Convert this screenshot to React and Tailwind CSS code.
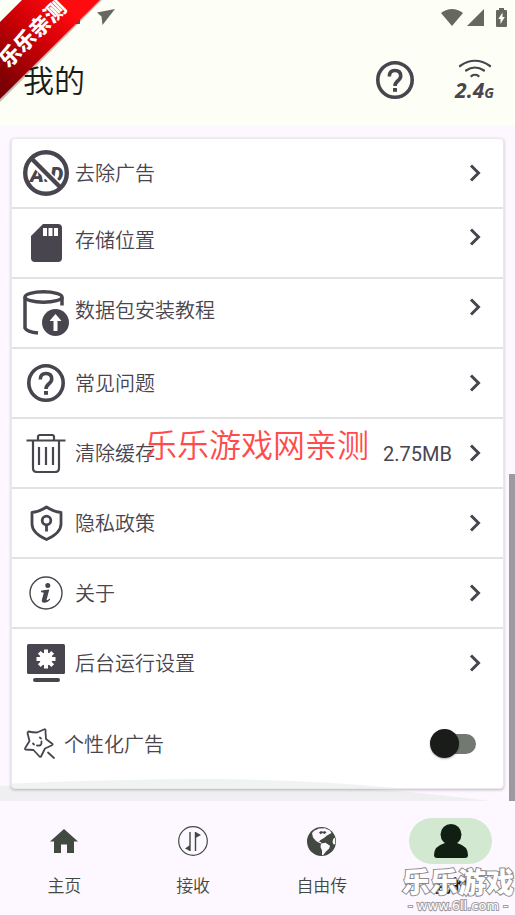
import React, { useState } from "react";

const MENU = [
  { id: "ads", label: "去除广告", Icon: NoAdsIcon },
  { id: "storage", label: "存储位置", Icon: SdCardIcon, raised: true },
  { id: "packages", label: "数据包安装教程", Icon: DatabaseIcon, raised: true },
  { id: "faq", label: "常见问题", Icon: HelpIcon },
  { id: "cache", label: "清除缓存", Icon: TrashIcon, value: "2.75MB" },
  { id: "privacy", label: "隐私政策", Icon: ShieldIcon },
  { id: "about", label: "关于", Icon: InfoIcon },
  { id: "background", label: "后台运行设置", Icon: MonitorIcon },
];

const TABS = [
  { id: "home", label: "主页", Icon: HomeIcon },
  { id: "receive", label: "接收", Icon: TransferIcon },
  { id: "free", label: "自由传", Icon: GlobeIcon },
  { id: "me", label: "我的", Icon: PersonIcon },
];

export default function App() {
  const [tab, setTab] = useState("me");

  return (
    <div className="relative flex min-h-screen flex-col overflow-hidden bg-[#fdf7ff] font-['Roboto','Noto_Sans_CJK_SC',sans-serif] text-[#49454f]">
      <Header />
      <main className="relative flex-1 px-[11px] py-3">
        <Settings />
        {/* Scroll thumb */}
        <div className="absolute right-0 bottom-0 h-[327px] w-[6px] bg-[#9e98a1]" />
      </main>
      <TabBar tab={tab} onChange={setTab} />
      <Ribbon />
    </div>
  );
}

function Header() {
  return (
    <header className="h-[126px] bg-[#fdfef5]">
      <StatusBar />
      <div className="flex h-[92px] items-center pr-5 pl-[23px]">
        <h1 className="flex-1 pt-1 text-[31px] font-[350] text-[#1a1c19]">我的</h1>
        <button type="button" aria-label="帮助" className="mr-10">
          <HelpIcon />
        </button>
        <button type="button" className="flex w-[41px] flex-col items-center pt-1">
          <svg width="34" height="19" viewBox="0 0 34 19" fill="none" stroke="#49454f" strokeLinecap="round" strokeWidth="2.2">
            <path d="M2 7Q17-3.500 32 7" />
            <path d="M8 11.500Q17 5.500 26 11.500" />
            <path d="M13.500 17Q17 14.500 20.500 17" />
          </svg>
          <span className="font-['Open_Sans'] text-[21px] leading-6 font-bold italic">
            2.4<span className="text-[14px]">G</span>
          </span>
        </button>
      </div>
    </header>
  );
}

function StatusBar() {
  return (
    <div className="flex h-[34px] items-center justify-between pr-2 pl-[75px] text-[#666860]">
      <svg width="40" height="18" viewBox="0 0 40 18" fill="currentColor">
        <path d="M0 11h5v5H0z" />
        <path d="M22 4.500L40 1 27.500 17 26.500 8.500z" />
      </svg>
      <div className="flex items-center">
        <svg width="22" height="17" viewBox="0 0 22 17" fill="currentColor" className="mr-1">
          <path d="M0 4Q11-4 22 4L11 17z" />
        </svg>
        <svg width="17" height="17" viewBox="0 0 17 17" fill="currentColor" className="mr-3">
          <path d="M17 0v17H0z" />
        </svg>
        <svg width="11" height="19" viewBox="0 0 11 19">
          <path fill="currentColor" d="M3 0h5v2h2q1 0 1 1v15q0 1-1 1H1q-1 0-1-1V3q0-1 1-1h2z" />
          <path fill="#fdfef5" d="M6.500 4.500v4.500h2.300L4.500 16v-5H2.300z" />
        </svg>
      </div>
    </div>
  );
}

function Settings() {
  const [personalized, setPersonalized] = useState(false);

  return (
    <div className="relative">
      {/* Pale hill behind the card */}
      <svg className="absolute -bottom-3 -left-[11px]" width="490" height="22" viewBox="0 0 490 22" fill="#efeef0">
        <path d="M0 7Q270-7 490 22H0z" />
      </svg>
      <section className="relative overflow-hidden rounded border border-[#ebe8ee] bg-white shadow-[0_1px_3px_rgba(0,0,0,0.25)]">
        <svg className="absolute bottom-0 left-0" width="400" height="9" viewBox="0 0 400 9" fill="#f0f4f1">
          <path d="M0 4.500Q110 0 200 0Q300 1 385 9H0z" />
        </svg>
        <ul>
          {MENU.map((item) => (
            <MenuRow key={item.id} item={item} />
          ))}
        </ul>
        <label className="relative flex h-[89px] cursor-pointer items-center pr-[27px] pl-3 text-[20px] font-[350]">
          <StarIcon />
          <span className="ml-2 flex-1 pt-0.5">个性化广告</span>
          <input
            type="checkbox"
            role="switch"
            checked={personalized}
            onChange={(e) => setPersonalized(e.target.checked)}
            className="relative h-[29px] w-[46px] appearance-none before:absolute before:top-[5px] before:right-0
                       before:h-5 before:w-10 before:rounded-full before:bg-[#717971] after:absolute after:top-0
                       after:left-0 after:size-[29px] after:rounded-full after:bg-[#1a1c19]
                       after:shadow-[0_1px_2px_rgba(0,0,0,0.3)] checked:after:left-[17px]"
          />
        </label>
      </section>
      <p className="pointer-events-none absolute top-[284px] left-[134px] text-[32px] leading-12 font-[350] text-[#ff4b4b]">
        乐乐游戏网亲测
      </p>
    </div>
  );
}

function MenuRow({ item }) {
  const { label, Icon, value, raised } = item;

  return (
    <li className="h-[70px] border-b-2 border-[#e2e1e3] last:border-transparent">
      <button type="button" className="flex h-full w-full items-center pr-[21px] pl-[11px] text-left">
        <span className="flex w-[46px] justify-center">
          <Icon />
        </span>
        <span className={`ml-[6px] flex-1 text-[20px] font-[350] ${raised ? "pb-1" : "pt-0.5"}`}>{label}</span>
        {value && <span className="mr-[17px] pt-0.5 text-[20px]">{value}</span>}
        <span className={raised ? "pb-3" : ""}>
          <svg width="13" height="18" viewBox="0 0 13 18" fill="none" stroke="currentColor" strokeWidth="3">
            <path d="M2 1.500L9.500 9 2 16.500" />
          </svg>
        </span>
      </button>
    </li>
  );
}

function TabBar({ tab, onChange }) {
  return (
    <nav className="relative grid h-[114px] grid-cols-4 bg-[#fdf7ff] pt-[17px] text-[#424940]">
      {TABS.map(({ id, label, Icon }) => {
        const active = id === tab;
        return (
          <button key={id} type="button" onClick={() => onChange(id)} className="flex flex-col items-center">
            <span
              className={`flex h-[46px] w-[83px] items-center justify-center rounded-full
                ${active ? "bg-[#d3e8d0] text-[#111f12]" : ""}`}
            >
              <Icon />
            </span>
            <span className={`mt-2 text-[17px] leading-7 ${active ? "font-bold text-[#1a1c19]" : "font-[350]"}`}>
              {label}
            </span>
          </button>
        );
      })}
      <Watermark />
    </nav>
  );
}

function Watermark() {
  return (
    <div className="pointer-events-none absolute right-px bottom-px flex flex-col items-center text-white [paint-order:stroke]">
      <span className="text-[28px] leading-7 font-black [-webkit-text-stroke:2px_#8b888e]">乐乐游戏</span>
      <span className="font-['DejaVu_Sans'] text-[13px] leading-4 [-webkit-text-stroke:2px_#a19ea4]">
        - www.6ll.com -
      </span>
    </div>
  );
}

function Ribbon() {
  return (
    <div className="pointer-events-none absolute top-0 left-0 size-[102px]">
      <svg className="absolute inset-0" width="102" height="102" viewBox="0 0 102 102">
        <defs>
          <linearGradient id="ribbon" x1="0" y1="1" x2="1" y2="0">
            <stop offset="0.1" stopColor="#7d0004" />
            <stop offset="0.5" stopColor="#cf0006" />
            <stop offset="0.8" stopColor="#ff0a0f" />
          </linearGradient>
        </defs>
        <path d="M24 0h78L0 102V24z" fill="#000" opacity="0.25" />
        <path d="M22 0h78L0 99V22z" fill="url(#ribbon)" />
      </svg>
      <span className="absolute top-[20px] -left-[9px] w-[84px] -rotate-45 text-center text-[21px] leading-7 font-black whitespace-nowrap text-white">
        乐乐亲测
      </span>
    </div>
  );
}

/* ---------- Menu icons ---------- */

function NoAdsIcon() {
  return (
    <svg width="46" height="46" viewBox="0 0 46 46">
      <text x="7" y="32" fontSize="21" fontWeight="900" fontStyle="italic" fontFamily="Roboto" fill="currentColor">
        A.D
      </text>
      <path d="M7 9l31 29" stroke="#fff" strokeWidth="8" />
      <circle cx="23" cy="23" r="20.800" fill="none" stroke="currentColor" strokeWidth="4.400" />
      <path d="M8 8l30 30" stroke="currentColor" strokeWidth="4.400" />
    </svg>
  );
}

function SdCardIcon() {
  return (
    <svg width="31" height="38" viewBox="0 0 31 38">
      <path fill="currentColor" d="M12 0h15q4 0 4 4v30q0 4-4 4H4q-4 0-4-4V12z" />
      <path fill="#fff" d="M12 4h4v8h-4zM17.500 4h4v8h-4zM23 4h4v8h-4z" />
    </svg>
  );
}

function DatabaseIcon() {
  return (
    <svg width="46" height="46" viewBox="0 0 46 46" fill="none" stroke="currentColor" strokeWidth="3.500">
      <ellipse cx="20.500" cy="7" rx="18.500" ry="5.200" />
      <path d="M2 7v31q2 4 13 5M39 7v8.500" />
      <circle cx="32.500" cy="32.500" r="13.500" fill="currentColor" stroke="none" />
      <path fill="#fff" stroke="none" d="M32.500 24l6 7H34.500v10h-4V31h-4z" />
    </svg>
  );
}

function HelpIcon() {
  return (
    <svg width="38" height="38" viewBox="0 0 38 38" fill="none" stroke="currentColor" strokeWidth="3.600">
      <circle cx="19" cy="19" r="17.200" />
      <path d="M13.300 15.500q0-6 5.700-6t5.700 5.500q0 2.500-3 5-2.700 2.200-2.700 5" />
      <path d="M19 27v3.800" strokeWidth="4" />
    </svg>
  );
}

function TrashIcon() {
  return (
    <svg width="40" height="40" viewBox="0 0 40 40" fill="none" stroke="currentColor" strokeWidth="2.200">
      <path d="M.500 7.500h39M12 7V4q0-2 2-2h12q2 0 2 2v3M7 8v27q0 4 4 4h18q4 0 4-4V8" />
      <path d="M13 14v18M20 14v18M27 14v18" />
    </svg>
  );
}

function ShieldIcon() {
  return (
    <svg width="33" height="36" viewBox="0 0 33 36" fill="none" stroke="currentColor" strokeWidth="2.800">
      <path strokeLinejoin="round" d="M16.500 2Q23 6.500 31 7.500V19q0 9-14.500 15.500Q2 28 2 19V7.500Q10 6.500 16.500 2z" />
      <circle cx="16.500" cy="15.500" r="4.300" />
      <path d="M16.500 19.500v7" />
    </svg>
  );
}

function InfoIcon() {
  return (
    <svg width="34" height="34" viewBox="0 0 34 34">
      <circle cx="17" cy="17" r="16" fill="none" stroke="currentColor" strokeWidth="1.400" />
      <circle cx="18.800" cy="9.500" r="2.500" fill="currentColor" />
      <path
        fill="currentColor"
        d="M12 14.800q4-1 8.300-1.300L17.700 23.300q-.3 1.500 1 .8l2-1.400.5 1q-3 3.300-6 3-3.200-.4-2.200-3.500l1.700-6q.2-1-2.700-.9z"
      />
    </svg>
  );
}

function MonitorIcon() {
  return (
    <svg width="38" height="38" viewBox="0 0 38 38">
      <rect width="38" height="30" y="0" rx="1.500" fill="currentColor" />
      <rect x="6" y="34" width="27" height="4" rx="2" fill="currentColor" />
      <g stroke="#fff" strokeWidth="4">
        <path d="M19 5.500v19M9.500 15h19M12.300 8.300l13.400 13.400M25.700 8.300L12.300 21.700" />
      </g>
      <circle cx="19" cy="15" r="6.500" fill="#fff" />
    </svg>
  );
}

function StarIcon() {
  return (
    <svg width="32" height="32" viewBox="0 0 32 32" fill="none" stroke="currentColor" strokeWidth="1.800" strokeLinecap="round" strokeLinejoin="round">
      <path d="M4.500 3.500Q9 4.500 13 4.500L20.500 1.200Q22 1.500 21.500 4L22 11l6.500 5q.5 1-1 1.500l-6.500 3-4 8q-1 1-2-.5L9.500 22l-8-.5q-1-.5 0-2l4-6.500L3.500 5q0-1 1-1.500z" />
      <path d="M24 24.500l6 5.500M15.800 9.500l1.200 1M9 15.500l1 1M13 17.500q5 1 4.500-4" />
    </svg>
  );
}

/* ---------- Tab icons ---------- */

function HomeIcon() {
  return (
    <svg width="28" height="24" viewBox="0 0 28 24" fill="currentColor">
      <path d="M14 0l14 12.500h-4V24h-7v-8.500h-6V24H4V12.500H0z" />
    </svg>
  );
}

function TransferIcon() {
  return (
    <svg width="30" height="30" viewBox="0 0 30 30">
      <circle cx="15" cy="15" r="14.300" fill="none" stroke="currentColor" strokeWidth="1.200" />
      <path d="M12 6v19M17.500 6v19" stroke="currentColor" strokeWidth="1.400" />
      <path fill="currentColor" d="M12 25v-6l-5 3.500zM17.500 6v6L23 9z" />
    </svg>
  );
}

function GlobeIcon() {
  return (
    <svg width="29" height="29" viewBox="0 0 29 29">
      <circle cx="14.500" cy="14.500" r="14.500" fill="currentColor" />
      <g fill="#fdf7ff">
        <path d="M5 6l2.500-2.500L12 1.500l6-.2 5 2.200 1.500 2.500L20 8.500l-3 2.500-3.500 2-1.500 1.500 2.500 1-1 1L9 14l-3-3.500z" />
        <path d="M14 16.500l4.500-.8 4.500 3-.8 2.800-3.200 3-3 3.800-1-.3v-4.500l-1.500-3.500z" />
        <path d="M28 10.500l-1.800 1.500-.7 3 1 2.500 1.800-.5z" />
      </g>
      <path fill="currentColor" d="M12 5.500l2-1.500 2 .8L18 4l1.500 1.500-2 1.500-2-1-2 1.200z" />
    </svg>
  );
}

function PersonIcon() {
  return (
    <svg width="34" height="34" viewBox="0 0 34 34" fill="currentColor">
      <circle cx="17" cy="10.500" r="10.500" />
      <path d="M11 19h12q11 3 11 12 0 3-3 3H3q-3 0-3-3 0-9 11-12z" />
    </svg>
  );
}
